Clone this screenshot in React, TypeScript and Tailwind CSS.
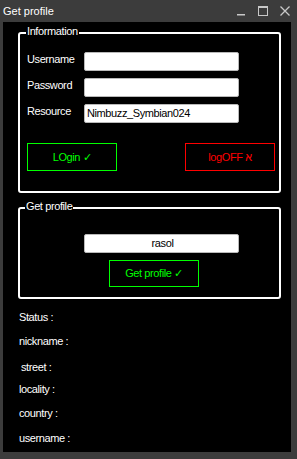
import React from "react";

const Field = ({ value = "", center = false }: { value?: string; center?: boolean }) => (
  <div
    className={`w-[155px] h-[19px] bg-white border border-[#b9b9b9] rounded-[2px] text-black text-[11px] leading-[17px] pl-[2px] ${center ? "text-center" : ""}`}
  >
    {value}
  </div>
);

export default function App() {
  return (
    <div
      className="w-[297px] h-[459px] bg-[#3c3c3c] flex flex-col"
      style={{ fontFamily: '"Liberation Sans", Arial, sans-serif' }}
    >
      {/* title bar */}
      <div className="h-[22px] flex items-start justify-between pl-[3px] pr-[5px] shrink-0">
        <span className="pt-[5px] text-white text-[11px] leading-[13px]">Get profile</span>
        <svg width="60" height="22" viewBox="0 0 60 22" fill="none">
          <rect x="5" y="14" width="8" height="1.5" fill="#c8c8c8" />
          <rect x="26.5" y="6.5" width="9" height="9" stroke="#c8c8c8" strokeWidth="1" />
          <rect x="26" y="6" width="10" height="2" fill="#c8c8c8" />
          <path d="M48.5 6.5 L57.5 15.5 M57.5 6.5 L48.5 15.5" stroke="#c8c8c8" strokeWidth="1.3" />
        </svg>
      </div>

      {/* content */}
      <div className="flex-1 bg-black ml-[3px] mr-[6px] mb-[7px] flex flex-col text-white text-[11px] leading-[13px] tracking-[-0.4px]">
        {/* Information group */}
        <div className="relative mt-[10px] ml-[15px] w-[263px] h-[161px] border-2 border-white rounded-[3px] pt-[18px] pl-[7px] shrink-0">
          <span className="absolute left-[6px] top-[-9px] px-[1px] bg-black">Information</span>
          <div className="flex flex-col gap-[7px]">
            <div className="flex items-start">
              <span className="w-[57px] mt-[1px]">Username</span>
              <Field />
            </div>
            <div className="flex items-start">
              <span className="w-[57px] mt-[1px]">Password</span>
              <Field />
            </div>
            <div className="flex items-start">
              <span className="w-[57px] mt-[1px]">Resource</span>
              <Field value="Nimbuzz_Symbian024" />
            </div>
          </div>
          <div className="flex gap-[68px] mt-[20px]">
            <div className="w-[90px] h-[28px] border border-[#00ff00] text-[#00ff00] flex items-center justify-center">
              LOgin ✓
            </div>
            <div className="w-[90px] h-[28px] border border-[#ff0000] text-[#ff0000] flex items-center justify-center">
              logOFF א
            </div>
          </div>
        </div>

        {/* Get profile group */}
        <div className="relative mt-[14px] ml-[15px] w-[263px] h-[92px] border-2 border-white rounded-[3px] pt-[25px] pl-[64px] shrink-0">
          <span className="absolute left-[5px] top-[-9px] px-[1px] bg-black">Get profile</span>
          <Field value="rasol" center />
          <div className="mt-[7px] ml-[25px] w-[90px] h-[27px] border border-[#00ff00] text-[#00ff00] flex items-center justify-center">
            Get profile ✓
          </div>
        </div>

        {/* status labels */}
        <div className="flex flex-col pl-[16px]">
          <span className="mt-[12px]">Status :</span>
          <span className="mt-[11px]">nickname :</span>
          <span className="mt-[13px] ml-[2px]">street :</span>
          <span className="mt-[9px]">locality :</span>
          <span className="mt-[11px]">country :</span>
          <span className="mt-[12px]">username :</span>
        </div>
      </div>
    </div>
  );
}
